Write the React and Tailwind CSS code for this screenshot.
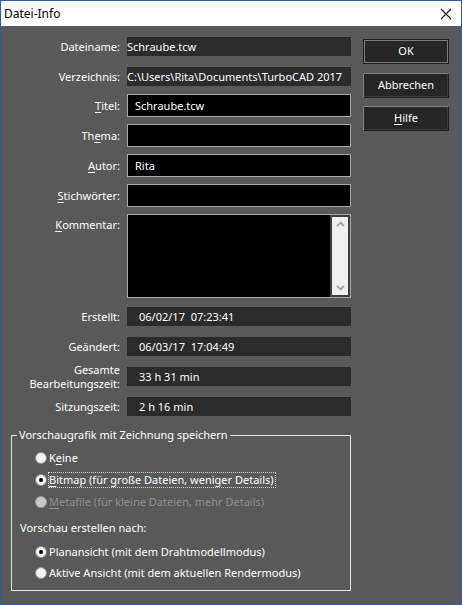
import React from "react";

const F = { fontFamily: '"Noto Sans", "Liberation Sans", sans-serif' };

function U({ children }) {
  return <span className="underline underline-offset-2">{children}</span>;
}

function Label({ children, top }) {
  return (
    <div
      className={
        "w-[119px] shrink-0 text-right text-white text-[11px] leading-[16px] " +
        (top ? "self-start pt-[3px]" : "self-center")
      }
    >
      {children}
    </div>
  );
}

function ReadOnly({ children, pad = "pl-0" }) {
  return (
    <div
      className={
        "w-[224px] h-[19px] bg-[#2b2b2b] text-white text-[11px] leading-[19px] whitespace-nowrap overflow-hidden shrink-0 " +
        pad
      }
    >
      {children}
    </div>
  );
}

function Input({ children }) {
  return (
    <div className="w-[224px] h-[23px] bg-black border border-[#a8a8a8] text-white text-[11px] leading-[21px] pl-[7px] whitespace-nowrap overflow-hidden">
      {children}
    </div>
  );
}

function Row({ children, mt, h = "" }) {
  return <div className={"flex gap-[7px] " + mt + " " + h}>{children}</div>;
}

function Radio({ checked, disabled }) {
  return (
    <div
      className={
        "w-[12px] h-[12px] rounded-full border flex items-center justify-center shrink-0 " +
        (disabled
          ? "bg-[#c9c9c9] border-[#9a9a9a]"
          : "bg-[#f4f4f4] border-[#8a8a8a]")
      }
    >
      {checked && <div className="w-[4px] h-[4px] rounded-full bg-black" />}
    </div>
  );
}

function RadioRow({ children, checked, disabled, focus, mt }) {
  return (
    <div className={"flex items-center h-[16px] " + mt}>
      <Radio checked={checked} disabled={disabled} />
      <span
        className={
          "ml-[1px] pr-[1px] text-[11px] leading-[14px] border " +
          (focus ? "border-dotted border-[#d0d0d0]" : "border-transparent") +
          (disabled ? " text-[#8e8e8e]" : " text-white")
        }
      >
        {children}
      </span>
    </div>
  );
}

function Button({ children, def, mt }) {
  return (
    <div
      className={
        "w-[86px] h-[25px] flex items-center justify-center text-white text-[11px] bg-[#262626] " +
        (def
          ? "border border-[#1c1c1c] shadow-[inset_0_0_0_1px_#76807f]"
          : "border border-t-[#858585] border-l-[#858585] border-r-[#1e1e1e] border-b-[#1e1e1e] shadow-[inset_-1px_-1px_0_0_#3a3a3a]") +
        " " +
        mt
      }
    >
      {children}
    </div>
  );
}

export default function App() {
  return (
    <div
      style={F}
      className="w-[462px] h-[605px] border border-[#1f5fb8] flex flex-col bg-[#595959] overflow-hidden"
    >
      {/* title bar */}
      <div className="h-[25px] bg-white flex items-center justify-between pl-[3px] pr-[8px] shrink-0">
        <span className="text-[12px] text-black leading-[16px]">Datei-Info</span>
        <svg width="12" height="12" viewBox="0 0 12 12" className="mr-[1px]">
          <path d="M1 1 L11 11 M11 1 L1 11" stroke="#111" strokeWidth="1.1" />
        </svg>
      </div>

      <div className="flex-1 flex flex-col">
        <div className="flex pt-[11px]">
          {/* left column */}
          <div className="flex flex-col">
            <Row mt="">
              <Label>Dateiname:</Label>
              <ReadOnly>Schraube.tcw</ReadOnly>
            </Row>
            <Row mt="mt-[11px]">
              <Label>Verzeichnis:</Label>
              <ReadOnly>C:\Users\Rita\Documents\TurboCAD 2017</ReadOnly>
            </Row>
            <Row mt="mt-[8px]">
              <Label>
                <U>T</U>itel:
              </Label>
              <Input>Schraube.tcw</Input>
            </Row>
            <Row mt="mt-[7px]">
              <Label>
                Th<U>e</U>ma:
              </Label>
              <Input></Input>
            </Row>
            <Row mt="mt-[7px]">
              <Label>
                <U>A</U>utor:
              </Label>
              <Input>Rita</Input>
            </Row>
            <Row mt="mt-[7px]">
              <Label>
                <U>S</U>tichwörter:
              </Label>
              <Input></Input>
            </Row>
            <Row mt="mt-[7px]">
              <Label top>
                <U>K</U>ommentar:
              </Label>
              <div className="w-[224px] h-[84px] bg-black border border-[#a8a8a8] flex justify-end">
                <div className="w-[20px] h-full border-2 border-[#3e3e3e] bg-[#f0f0f0] flex flex-col items-center justify-between py-[4px]">
                  <svg width="9" height="6" viewBox="0 0 9 6">
                    <path d="M1 5 L4.5 1.5 L8 5" stroke="#a6a6a6" strokeWidth="1.8" fill="none" />
                  </svg>
                  <svg width="9" height="6" viewBox="0 0 9 6">
                    <path d="M1 1 L4.5 4.5 L8 1" stroke="#a6a6a6" strokeWidth="1.8" fill="none" />
                  </svg>
                </div>
              </div>
            </Row>
            <Row mt="mt-[9px]">
              <Label>Erstellt:</Label>
              <ReadOnly pad="pl-[12px]">06/02/17&nbsp;&nbsp;07:23:41</ReadOnly>
            </Row>
            <Row mt="mt-[11px]">
              <Label>Geändert:</Label>
              <ReadOnly pad="pl-[12px]">06/03/17&nbsp;&nbsp;17:04:49</ReadOnly>
            </Row>
            <Row mt="mt-[11px]" h="h-[19px] items-center">
              <div className="w-[119px] shrink-0 text-right text-white text-[11px] leading-[14px]">
                Gesamte
                <br />
                Bearbeitungszeit:
              </div>
              <ReadOnly pad="pl-[12px]">33 h 31 min</ReadOnly>
            </Row>
            <Row mt="mt-[11px]">
              <Label>Sitzungszeit:</Label>
              <ReadOnly pad="pl-[12px]">2 h 16 min</ReadOnly>
            </Row>
          </div>

          {/* buttons */}
          <div className="flex flex-col ml-[12px] pt-[2px]">
            <Button def>OK</Button>
            <Button mt="mt-[9px]">Abbrechen</Button>
            <Button mt="mt-[8px]">
              <span>
                <U>H</U>ilfe
              </span>
            </Button>
          </div>
        </div>

        {/* group box */}
        <fieldset className="ml-[10px] w-[340px] mt-[11px] border border-[#e6e6e6] p-0 pb-[9px] min-w-0">
          <legend className="ml-[5px] px-[2px] text-white text-[11px] leading-[16px]">
            Vorschaugrafik mit Zeichnung speichern
          </legend>
          <div className="flex flex-col pl-[23px] pt-[7px]">
            <RadioRow>
              K<U>e</U>ine
            </RadioRow>
            <RadioRow checked focus mt="mt-[6px]">
              <U>B</U>itmap (für große Dateien, weniger Details)
            </RadioRow>
            <RadioRow disabled mt="mt-[6px]">
              <U>M</U>etafile (für kleine Dateien, mehr Details)
            </RadioRow>
            <div className="-ml-[15px] mt-[10px] h-[16px] text-white text-[11px] leading-[16px]">
              Vorschau erstellen nach:
            </div>
            <RadioRow checked mt="mt-[8px]">
              Planansicht (mit dem Drahtmodellmodus)
            </RadioRow>
            <RadioRow mt="mt-[5px]">
              Aktive Ansicht (mit dem aktuellen Rendermodus)
            </RadioRow>
          </div>
        </fieldset>
      </div>
    </div>
  );
}
